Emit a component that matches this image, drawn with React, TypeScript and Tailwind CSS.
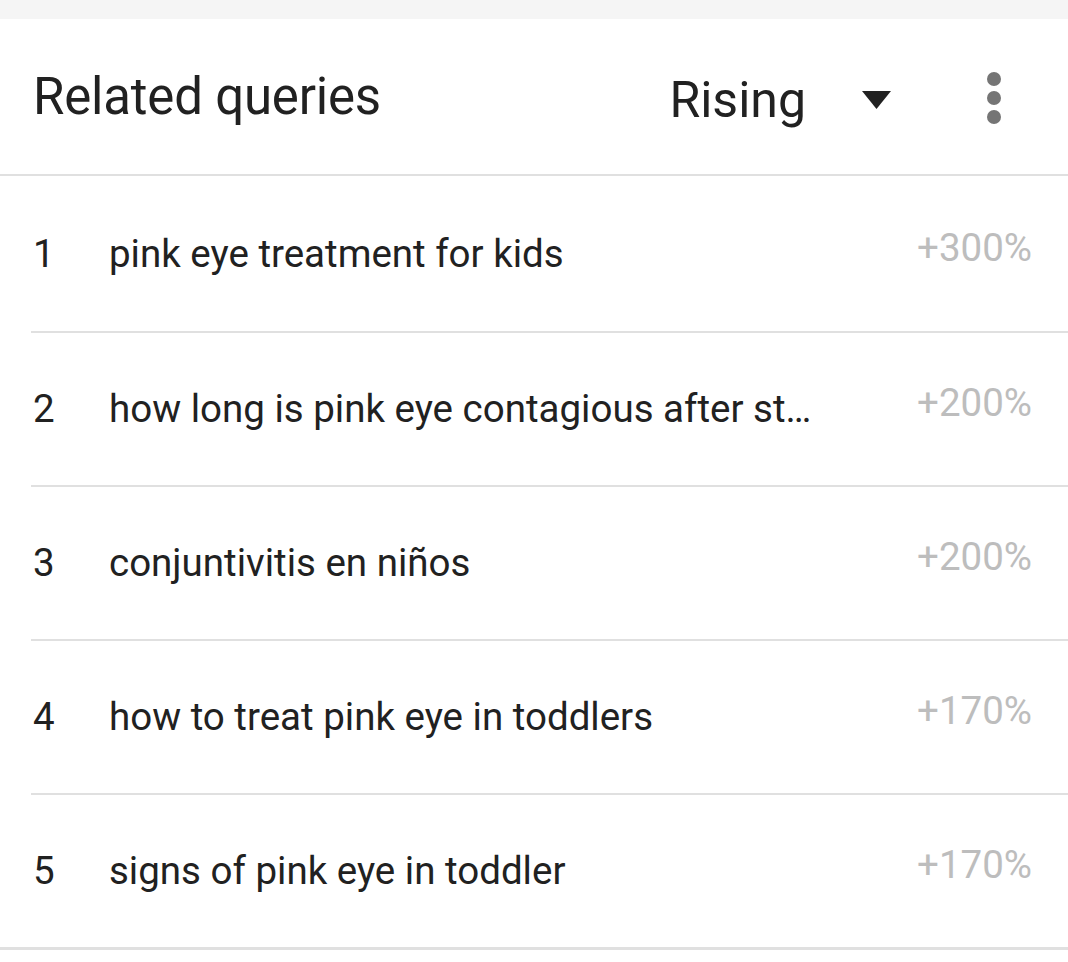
import React from "react";

const rows = [
  { n: 1, q: "pink eye treatment for kids", v: "+300%" },
  { n: 2, q: "how long is pink eye contagious after st…", v: "+200%" },
  { n: 3, q: "conjuntivitis en niños", v: "+200%" },
  { n: 4, q: "how to treat pink eye in toddlers", v: "+170%" },
  { n: 5, q: "signs of pink eye in toddler", v: "+170%" },
];

export default function App() {
  return (
    <div
      className="w-[1068px] h-[962px] bg-white overflow-hidden text-[#212121]"
      style={{ fontFamily: "Roboto, 'Noto Sans', Arial, sans-serif" }}
    >
      <div className="h-[19px] bg-[#f5f5f5]" />
      <div className="h-[155px] flex items-center pl-[33px]">
        <div className="text-[51px] leading-none tracking-[-0.2px]">Related queries</div>
        <div className="ml-auto text-[50px] leading-none mt-[6px]">Rising</div>
        <svg className="ml-[56px] mt-[6px]" width="29" height="18" viewBox="0 0 29 18">
          <polygon points="0,0 29,0 14.5,18" fill="#212121" />
        </svg>
        <div className="ml-[96px] mr-[67px] flex flex-col gap-[5px] mt-[2px]">
          <span className="block w-[14px] h-[14px] rounded-full bg-[#757575]" />
          <span className="block w-[14px] h-[14px] rounded-full bg-[#757575]" />
          <span className="block w-[14px] h-[14px] rounded-full bg-[#757575]" />
        </div>
      </div>
      <div className="h-[2px] bg-[#e0e0e0]" />
      <div className="pl-[31px]">
        {rows.map((r, i) => (
          <div
            key={r.n}
            className={`flex items-center border-[#e0e0e0] ${i === 0 ? "h-[157px]" : i === rows.length - 1 ? "h-[155px]" : "h-[154px]"} ${i === rows.length - 1 ? "-ml-[31px] pl-[31px] border-b-[3px]" : "border-b-2"}`}
          >
            <div className="w-[78px] pl-[2px] text-[38.5px] text-[#212121]">{r.n}</div>
            <div className="flex-1 text-[38.5px] whitespace-nowrap">{r.q}</div>
            <div className="pr-[36px] mb-[12px] text-[38.5px] text-[#bdbdbd]">{r.v}</div>
          </div>
        ))}
      </div>
    </div>
  );
}
